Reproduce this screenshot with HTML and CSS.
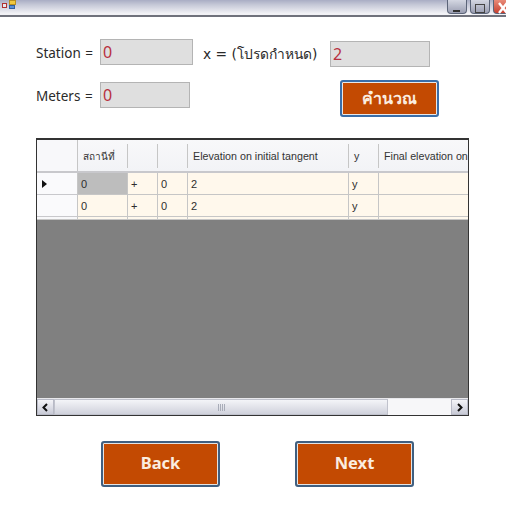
FILE: index.html
```html
<!DOCTYPE html>
<html lang="th">
<head>
<meta charset="utf-8">
<title>Station</title>
<link rel="stylesheet" href="styles.css">
</head>
<body>
<header class="titlebar">
  <svg class="app-icon" width="16" height="12" viewBox="0 0 16 12">
    <rect x="1.5" y="3.5" width="4" height="4" fill="#e8e8f0" stroke="#b03030"/>
    <rect x="8.5" y="0.5" width="6" height="4" fill="#f0c840" stroke="#b89020"/>
    <rect x="8.5" y="5.5" width="5" height="3" fill="#5a90d8" stroke="#3060a0"/>
  </svg>
  <div class="win-btns">
    <span class="win-btn"><svg width="18" height="13" viewBox="0 0 18 13"><rect x="5" y="8" width="7" height="2" fill="#333"/></svg></span>
    <span class="win-btn"><svg width="18" height="13" viewBox="0 0 18 13"><rect x="4.5" y="2.5" width="9" height="8" fill="none" stroke="#444"/></svg></span>
    <span class="win-btn win-close"><svg width="18" height="13" viewBox="0 0 18 13"><path d="M5 1 L13 11 M13 1 L5 11" stroke="#fff" stroke-width="2.4"/></svg></span>
  </div>
</header>
<main class="content">
  <section class="form">
    <div class="col-left">
      <div class="field">
        <label class="lbl lbl-left">Station =</label>
        <div class="box box-station">0</div>
      </div>
      <div class="field">
        <label class="lbl lbl-left">Meters =</label>
        <div class="box box-meters">0</div>
      </div>
    </div>
    <div class="col-right">
      <div class="field">
        <label class="lbl lbl-x">x = (โปรดกำหนด)</label>
        <div class="box box-x">2</div>
      </div>
      <button class="btn btn-calc">คำนวณ</button>
    </div>
  </section>
  <section class="grid">
    <div class="row head">
      <div class="cell c0"></div>
      <div class="cell c1 th-thai">สถานีที่</div>
      <div class="cell c2"></div>
      <div class="cell c3"></div>
      <div class="cell c4">Elevation on initial tangent</div>
      <div class="cell c5">y</div>
      <div class="cell c6">Final elevation on</div>
    </div>
    <div class="row data">
      <div class="cell c0"><span class="arrow"></span></div>
      <div class="cell c1 selected">0</div>
      <div class="cell c2">+</div>
      <div class="cell c3">0</div>
      <div class="cell c4">2</div>
      <div class="cell c5">y</div>
      <div class="cell c6"></div>
    </div>
    <div class="row data">
      <div class="cell c0"></div>
      <div class="cell c1">0</div>
      <div class="cell c2">+</div>
      <div class="cell c3">0</div>
      <div class="cell c4">2</div>
      <div class="cell c5">y</div>
      <div class="cell c6"></div>
    </div>
    <div class="row row-stub">
      <div class="cell c0"></div>
      <div class="cell c1"></div>
      <div class="cell c2"></div>
      <div class="cell c3"></div>
      <div class="cell c4"></div>
      <div class="cell c5"></div>
      <div class="cell c6"></div>
    </div>
    <div class="empty"></div>
    <div class="scrollbar">
      <span class="sb-btn"><svg width="9" height="9" viewBox="0 0 9 9"><path d="M6 1 L2.5 4.5 L6 8" fill="none" stroke="#111" stroke-width="2"/></svg></span>
      <span class="sb-thumb"><svg width="9" height="7" viewBox="0 0 9 7"><path d="M1.5 0V7M3.5 0V7M5.5 0V7M7.5 0V7" stroke="#a8acb8"/></svg></span>
      <span class="sb-track"></span>
      <span class="sb-btn"><svg width="9" height="9" viewBox="0 0 9 9"><path d="M3 1 L6.5 4.5 L3 8" fill="none" stroke="#111" stroke-width="2"/></svg></span>
    </div>
  </section>
  <section class="actions">
    <button class="btn btn-nav">Back</button>
    <button class="btn btn-nav">Next</button>
  </section>
</main>
</body>
</html>
```
FILE: styles.css
```css
* { box-sizing: border-box; }
html, body { margin: 0; padding: 0; }
body {
  width: 506px;
  height: 514px;
  overflow: hidden;
  background: #fff;
  font-family: "DejaVu Sans", "Noto Sans", sans-serif;
  color: #222;
}
.titlebar {
  height: 17px;
  display: flex;
  justify-content: space-between;
  background: linear-gradient(#a9adc4, #c4c7d6 30%, #f2f2f6 90%);
  border-bottom: 2px solid #70727c;
  overflow: hidden;
}
.app-icon { margin-left: 1px; }
.win-btns { display: flex; gap: 3px; margin-right: -7px; height: 14px; }
.win-btn {
  width: 20px;
  height: 14px;
  border: 1px solid #5b6478;
  border-top: 0;
  border-radius: 0 0 4px 4px;
  background: linear-gradient(#d4d7e2, #9a9eb2);
}
.win-close { background: linear-gradient(#e88a78, #c84030); }
.form {
  display: flex;
  height: 121px;
  padding: 22px 0 0 36px;
}
.col-left { display: flex; flex-direction: column; gap: 17px; width: 167px; }
.field { display: flex; align-items: center; height: 26px; }
.lbl { font-size: 14px; color: #2a2a2a; white-space: nowrap; }
.lbl-left {
  width: 64px;
  padding-top: 2px;
  font-family: "Noto Sans", sans-serif;
  font-size: 13.5px;
  word-spacing: 1px;
}
.box {
  height: 26px;
  border: 1px solid #b4b4b4;
  background: #dfdfdf;
  color: #b83040;
  font-family: "Noto Sans", sans-serif;
  font-size: 16px;
  line-height: 24px;
  padding-left: 2px;
}
.box-station { width: 93px; }
.box-meters { width: 90px; }
.col-right { display: flex; flex-direction: column; align-items: flex-start; }
.lbl-x { width: 127px; font-family: "DejaVu Sans", "Noto Sans CJK SC", sans-serif; font-size: 13.8px; }
.col-right .field { margin-top: 2px; }
.box-x { width: 100px; }
.btn {
  background: #c34a02;
  color: #fbeee0;
  font-family: "Noto Sans", sans-serif;
  font-weight: bold;
  padding: 0;
  cursor: default;
}
.btn-calc {
  width: 99px;
  height: 37px;
  margin: 13px 0 0 137px;
  border: 2px solid #3a6ea8;
  box-shadow: inset 0 0 0 1px #e8e8e8;
  border-radius: 3px;
  font-family: "DejaVu Sans", "Noto Sans", sans-serif;
  font-size: 16px;
}
.grid {
  margin-left: 36px;
  width: 433px;
  height: 278px;
  border: 1px solid #333;
  border-top-width: 2px;
  display: flex;
  flex-direction: column;
  background: #808080;
}
.row { display: flex; background: #fff; }
.head {
  height: 33px;
  background: linear-gradient(#f8f8fa, #f2f3f6);
  border-bottom: 2px solid #c8c8cc;
  font-family: "Liberation Sans", sans-serif;
  font-size: 10.7px;
  color: #333;
}
.data {
  height: 22px;
  font-family: "Liberation Sans", sans-serif;
  font-size: 11px;
  color: #2e2e2e;
  background: #fff8ec;
}
.row-stub { height: 3px; background: #fff8ec; }
.cell {
  display: flex;
  align-items: center;
  padding-left: 5px;
  border-right: 1px solid #c6c6c6;
  border-bottom: 1px solid #c6c6c6;
  white-space: nowrap;
  overflow: hidden;
  flex: none;
}
.head .cell { border-bottom: 0; margin: 4px 0 3px; }
.head .c0 { margin: 0; }
.data .cell { padding-left: 3px; }
.c0 { width: 41px; background: #f8f8fa; }
.data .c0 { background: #fafafc; border-bottom: 1px solid #c8c8cc; }
.c1 { width: 50px; }
.c2 { width: 30px; }
.c3 { width: 30px; }
.c4 { width: 161px; }
.c5 { width: 30px; }
.c6 { width: 89px; border-right: 0; }
.th-thai { font-family: "Noto Sans CJK SC", "DejaVu Sans", sans-serif; font-size: 10px; }
.selected { background: #bdbdbd; }
.arrow {
  width: 0;
  height: 0;
  margin-left: 2px;
  border-left: 5px solid #111;
  border-top: 4px solid transparent;
  border-bottom: 4px solid transparent;
}
.empty { flex: 1; background: #808080; }
.scrollbar {
  height: 17px;
  display: flex;
  align-items: stretch;
  background: #f7f7f9;
  border-top: 1px solid #e8e8ec;
}
.sb-btn {
  width: 17px;
  display: flex;
  align-items: center;
  justify-content: center;
  background: linear-gradient(#f4f4f8, #c8cad6);
  border: 1px solid #b8bac6;
  flex: none;
}
.sb-thumb {
  width: 334px;
  display: flex;
  align-items: center;
  justify-content: center;
  background: linear-gradient(#f4f5f8, #d0d2dc);
  border: 1px solid #c0c2cc;
  flex: none;
}
.sb-track { flex: 1; }
.actions {
  display: flex;
  gap: 75px;
  padding: 25px 0 0 101px;
}
.btn-nav {
  width: 119px;
  height: 46px;
  border: 2px solid #3f5f80;
  box-shadow: inset 0 0 0 1px #e4e4e4;
  border-radius: 3px;
  font-size: 16.5px;
  padding-bottom: 4px;
}
```
